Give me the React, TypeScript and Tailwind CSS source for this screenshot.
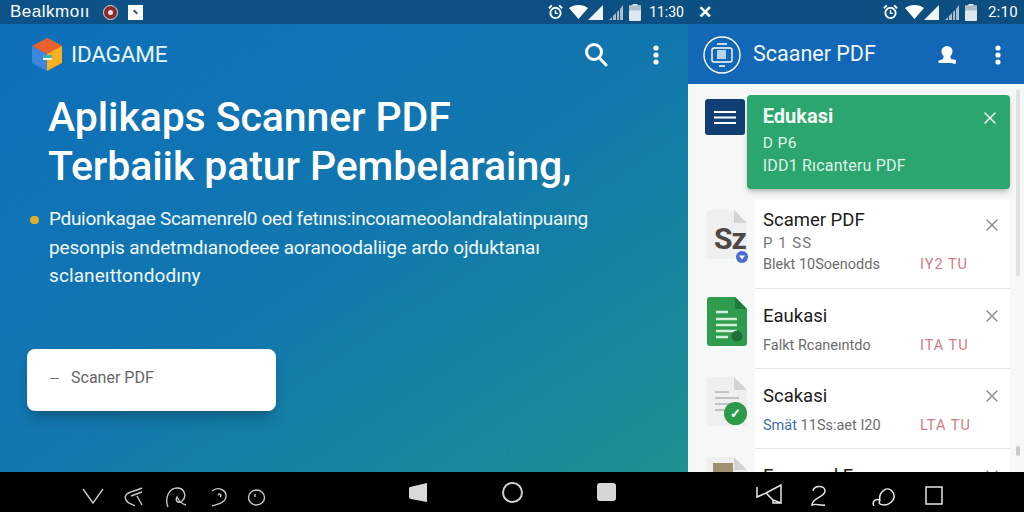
import React from 'react';
import { X } from 'lucide-react';

const Wifi = () => (
  <svg width="19" height="14" viewBox="0 0 19 14"><path d="M0 3C5.5 -1 13.5 -1 19 3L9.5 14z" fill="#fff" /></svg>
);
const Signal = () => (
  <svg width="15" height="15" viewBox="0 0 15 15">
    <path d="M15 0V15H0z" fill="#eef3f6" />
  </svg>
);
const SignalBars = () => (
  <svg width="14" height="15" viewBox="0 0 14 15" fill="#a9bfd0">
    <path d="M0 15L3 12V15zM4 15V11L7 8V15zM8 15V7L10 5V15zM11 15V4L14 0V15z" />
  </svg>
);
const Battery = () => (
  <svg width="12" height="17" viewBox="0 0 12 17">
    <rect x="3.5" y="0" width="5" height="2" fill="#dfe8ee" />
    <rect x="0" y="1.5" width="12" height="15.5" rx="1" fill="#dfe8ee" />
    <rect x="0" y="1.5" width="12" height="5" fill="#aebfcc" />
  </svg>
);
const Alarm = () => (
  <svg width="15" height="16" viewBox="0 0 16 16" fill="none" stroke="#fff" strokeWidth="2">
    <circle cx="8" cy="9" r="5.5" />
    <path d="M8 6v3.5h2.5" strokeWidth="1.5" />
    <path d="M1 4l3-3M15 4l-3-3" />
  </svg>
);
const Dots = () => (
  <svg width="8" height="20" viewBox="0 0 8 20" fill="#fff">
    <circle cx="4" cy="3" r="2.6" />
    <circle cx="4" cy="10" r="2.6" />
    <circle cx="4" cy="17" r="2.6" />
  </svg>
);

const FileGray = ({ children }: any) => (
  <svg width="40" height="50" viewBox="0 0 40 50">
    <path d="M3 0H27L40 13V46a3 3 0 0 1-3 3H3a3 3 0 0 1-3-3V3a3 3 0 0 1 3-3z" fill="#efefef" />
    <path d="M27 0L40 13H27z" fill="#d4d4d4" />
    {children}
  </svg>
);

const Row = ({ icon, title, sub, subAccent, tail, last }: any) => (
  <div className="flex h-[80px] shrink-0">
    <div className="w-[67px] shrink-0 pl-[19px] pt-[8px]">{icon}</div>
    <div className={`flex-1 flex bg-white pl-[8px] ${last ? '' : 'border-b border-[#e6e8e8]'}`}>
      <div className="flex-1 pt-[15px]">
        <div className="text-[18.5px] leading-[24px] text-[#1c1c1c]">{title}</div>
        {sub && (
          <div className="mt-[9px] flex text-[14.5px] leading-[18px] text-[#6d6d6d]">
            <span className="w-[157px]">
              {subAccent && <span className="text-[#3f6fa8]">{subAccent} </span>}
              {sub}
            </span>
            <span className="text-[#cf7d84] tracking-[1px]">{tail}</span>
          </div>
        )}
      </div>
      <X size={20} strokeWidth={1.6} className="text-[#8a8a8a] mr-[8px] mt-[17px]" />
    </div>
  </div>
);

export default function App() {
  return (
    <div className="w-[1024px] h-[512px] flex flex-col overflow-hidden bg-black font-['Roboto',sans-serif]">
      {/* status bar */}
      <div className="h-[24px] shrink-0 flex bg-gradient-to-r from-[#0d5288] to-[#0c4e80] text-white">
        <div className="w-[688px] flex items-center pl-[10px]">
          <span className="w-[80px] whitespace-nowrap text-[17px] tracking-[0.5px] font-['Liberation_Sans',sans-serif]">Bealkmoıı</span>
          <span className="ml-[13px] w-[15px] h-[15px] rounded-full bg-[#8c2a2a] border border-[#e9d6d6] flex items-center justify-center">
            <span className="w-[5px] h-[5px] rounded-full bg-[#f3e3e3]" />
          </span>
          <span className="ml-[10px] w-[15px] h-[15px] bg-white flex items-center justify-center">
            <span className="w-[5px] h-[2px] bg-[#33536d] rotate-45" />
          </span>
          <div className="ml-auto flex items-center pr-[4px]">
            <Alarm />
            <span className="ml-[6px]"><Wifi /></span>
            <Signal />
            <span className="ml-[6px]"><SignalBars /></span>
            <span className="ml-[6px]"><Battery /></span>
            <span className="ml-[8px] text-[14px]">11:30</span>
          </div>
        </div>
        <div className="flex-1 flex items-center pl-[10px]">
          <span className="text-[17px] font-bold leading-none">✕</span>
          <div className="ml-auto flex items-center pr-[6px]">
            <Alarm />
            <span className="ml-[7px]"><Wifi /></span>
            <Signal />
            <span className="ml-[6px]"><SignalBars /></span>
            <span className="ml-[6px]"><Battery /></span>
            <span className="ml-[11px] text-[15px] tracking-[0.3px]">2:10</span>
          </div>
        </div>
      </div>

      <div className="flex-1 flex min-h-0">
        {/* left panel */}
        <div className="w-[688px] shrink-0 bg-gradient-to-br from-[#0e6fbb] via-[#1277ae] to-[#1f9191] flex flex-col">
          <div className="h-[60px] shrink-0 flex items-center pl-[32px] pr-[28px] pt-[1px]">
            <svg width="30" height="33" viewBox="0 0 30 33">
              <path d="M15 0L30 8V25L15 33z" fill="#f9b01e" />
              <path d="M0 8L15 16V33L0 25z" fill="#3c86dc" />
              <path d="M15 0L30 8L15 16L0 8z" fill="#e8602d" />
              <path d="M11 17h9v3h-9z" fill="#3bb3b0" />
              <path d="M11 20h9v2h-9z" fill="#f4f7f0" />
            </svg>
            <span className="ml-[9px] text-[22.5px] text-[#e9f6fb] tracking-[-0.2px]">IDAGAME</span>
            <svg className="ml-auto" width="24" height="25" viewBox="0 0 24 25" fill="none" stroke="#fff" strokeWidth="3" strokeLinecap="round">
              <circle cx="10" cy="10" r="7.5" />
              <path d="M15.5 16L22 23" />
            </svg>
            <span className="ml-[44px]"><Dots /></span>
          </div>
          <div className="pl-[48px] pt-[9px]">
            <h1 className="whitespace-nowrap text-[41px] leading-[49px] font-medium text-white tracking-[-0.1px]">
              Aplikaps Scanner PDF
              <br />
              Terbaiik patur Pembelaraing,
            </h1>
          </div>
          <div className="relative pl-[49px] pt-[14px] text-[19px] leading-[28.5px] text-[#f0f8fb] whitespace-nowrap">
            <span className="absolute left-[30px] top-[25px] w-[9px] h-[8px] rounded-full bg-[#dcae2e]" />
            <p className="tracking-[-0.32px]">Pduionkagae Scamenrel0 oed fetınıs:incoıameoolandralatinpuaıng</p>
            <p className="tracking-[-0.17px]">pesonpis andetmdıanodeee aoranoodaliige ardo ojduktanaı</p>
            <p className="tracking-[0.1px]">sclaneıttondodıny</p>
          </div>
          <div className="pl-[27px] pt-[58px]">
            <div className="w-[249px] h-[62px] bg-white rounded-[8px] shadow-lg shadow-black/20 flex items-center pl-[23px] pb-[3px] text-[16px] text-[#666]">
              <span className="w-[9px] h-[1px] bg-[#777] mr-[12px]" />
              Scaner PDF
            </div>
          </div>
        </div>

        {/* right panel */}
        <div className="flex-1 flex flex-col min-w-0 bg-[#f6f7f7]">
          <div className="h-[60px] shrink-0 bg-[#1268b6] flex items-center pl-[15px] pr-[22px] pt-[1px] text-white">
            <svg width="38" height="38" viewBox="0 0 38 38" fill="none" stroke="#fff">
              <circle cx="19" cy="19" r="18" strokeWidth="1.4" />
              <rect x="9" y="12" width="20" height="14" rx="2" strokeWidth="1.4" />
              <rect x="14" y="14" width="9" height="9" fill="#b7d4ee" stroke="none" />
              <path d="M14 8h10M16 30h6" strokeWidth="1.4" />
            </svg>
            <span className="ml-[12px] text-[21.5px] text-[#eef5fb]">Scaaner PDF</span>
            <svg className="ml-auto" width="20" height="20" viewBox="0 0 20 20" fill="#fff">
              <circle cx="10" cy="6.5" r="5.5" />
              <path d="M7 10h6l1 4 5 1v3l-1 1-4-1H2l-1-2 5-2z" />
            </svg>
            <span className="ml-[37px]"><Dots /></span>
          </div>

          <div className="flex-1 relative overflow-hidden flex min-h-0">
            <div className="flex-1 min-w-0 pt-[11px]">
              <div className="flex items-start pl-[17px] pr-[2px]">
                <div className="mt-[4px] w-[40px] h-[36px] rounded-[3px] bg-[#123f73] flex items-center justify-center">
                  <svg width="22" height="14" viewBox="0 0 22 14" stroke="#fff" strokeWidth="2.2">
                    <path d="M0 2h22M0 7.5h22M0 13h22" />
                  </svg>
                </div>
                <div className="ml-[2px] w-[265px] h-[94px] rounded-[4px] bg-[#2ba66e] shadow-md shadow-black/20 pl-[16px] pr-[10px] pt-[8px] text-[#dff3e9] flex">
                  <div className="flex-1">
                    <div className="text-[20px] leading-[26px] font-bold text-[#f3fbf6]">Edukasi</div>
                    <div className="mt-[4px] text-[15.5px] leading-[20px] tracking-[0.4px]">D P6</div>
                    <div className="mt-[3px] text-[16px] leading-[20px] tracking-[0.2px]">IDD1 Rıcanteru PDF</div>
                  </div>
                  <X size={20} strokeWidth={1.6} className="text-white mt-[5px]" />
                </div>
              </div>
              <div className="mt-[11px] pr-[2px]">
                <div className="flex h-[89px]">
                  <div className="w-[67px] shrink-0 pl-[19px] pt-[10px]">
                    <div className="relative w-[40px]">
                      <FileGray />
                      <span className="absolute left-[7px] top-[14px] text-[30px] leading-[30px] font-bold text-[#4d4747] tracking-[-1px]">Sz</span>
                      <svg className="absolute left-[28px] top-[40px]" width="14" height="14" viewBox="0 0 14 14">
                        <circle cx="7" cy="7" r="6.5" fill="#4a6fd0" stroke="#fff" />
                        <path d="M4 5.5h6L7 9.5z" fill="#fff" />
                      </svg>
                    </div>
                  </div>
                  <div className="flex-1 flex bg-white pl-[8px] border-b border-[#e6e8e8]">
                    <div className="flex-1 pt-[8px]">
                      <div className="text-[18.5px] leading-[24px] text-[#1c1c1c]">Scamer PDF</div>
                      <div className="mt-[2px] text-[15px] leading-[18px] tracking-[1px] text-[#777]">P 1 SS</div>
                      <div className="mt-[4px] flex text-[14.5px] leading-[18px] text-[#6d6d6d]">
                        <span className="w-[157px]">Blekt 10Soenodds</span>
                        <span className="text-[#cf7d84] tracking-[1px]">IY2 TU</span>
                      </div>
                    </div>
                    <X size={20} strokeWidth={1.6} className="text-[#8a8a8a] mr-[8px] mt-[15px]" />
                  </div>
                </div>
                <Row
                  title="Eaukasi"
                  sub="Falkt Rcaneıntdo"
                  tail="ITA TU"
                  icon={
                    <svg width="40" height="50" viewBox="0 0 40 50">
                      <path d="M3 0H28L40 12V46a3 3 0 0 1-3 3H3a3 3 0 0 1-3-3V3a3 3 0 0 1 3-3z" fill="#2f9c4d" />
                      <path d="M28 0L40 12H28z" fill="#1f7a3b" />
                      <path d="M9 15h12M9 22h21M9 28h21M9 34h21M9 40h12" stroke="#d6efdb" strokeWidth="2.4" />
                      <circle cx="30" cy="39" r="5.5" fill="#1c7038" />
                    </svg>
                  }
                />
                <Row
                  title="Scakasi"
                  subAccent="Smät"
                  sub="11Ss:aet I20"
                  tail="LTA TU"
                  icon={
                    <div className="relative w-[40px]">
                      <FileGray>
                        <path d="M8 15h14M8 21h24M8 27h24M8 33h10" stroke="#b4b4b4" strokeWidth="1.5" />
                      </FileGray>
                      <span className="absolute left-[17px] top-[25px] w-[23px] h-[23px] rounded-full bg-[#2c9a48] flex items-center justify-center text-white text-[13px] font-bold">✓</span>
                    </div>
                  }
                />
                <Row
                  last
                  title="Fcaanıad F"
                  icon={
                    <FileGray>
                      <rect x="6" y="6" width="20" height="12" fill="#a09070" />
                    </FileGray>
                  }
                />
              </div>
            </div>
            <div className="w-[12px] shrink-0 flex flex-col items-center">
              <div className="mt-[6px] w-[4px] h-[186px] bg-[#e1e3e3]" />
              <div className="mt-[170px] w-[4px] h-[10px] rounded-full bg-[#c9cccc]" />
            </div>
          </div>
        </div>
      </div>

      {/* navigation bar */}
      <div className="h-[40px] shrink-0 flex items-center bg-black">
        <div className="w-[688px] flex items-center pl-[82px]">
          <svg width="190" height="30" viewBox="0 0 190 30" fill="none" stroke="#c8c8c8" strokeWidth="1.4">
            <path d="M1 12L11 26L21 12" />
            <path d="M60 11C52 15 40 15 44 23C46 27 50 27 53 29M49 19L60 15M55 19L60 28" />
            <path d="M86 30C82 20 88 11 95 11C103 11 105 20 100 24C96 27 93 24 95 20C97 24 100 27 104 28" />
            <path d="M130 14C136 9 145 13 144 20C143 26 136 27 130 29M136 18C138 16 140 18 138 20" />
            <ellipse cx="174.5" cy="20.5" rx="8" ry="7.5" />
            <path d="M173 17v3" />
          </svg>
          <svg className="ml-[137px]" width="18" height="19" viewBox="0 0 18 19" fill="#d8d8d8">
            <path d="M0 6a2 2 0 0 1 1-2L18 0V19L2 16a2 2 0 0 1-2-2z" />
          </svg>
          <span className="ml-[75px] w-[21px] h-[21px] rounded-full border-2 border-[#d0d0d0]" />
          <span className="ml-[74px] w-[19px] h-[18px] rounded-[3px] bg-[#d6d6d6]" />
        </div>
        <div className="flex-1 flex items-center pl-[68px]">
          <svg width="200" height="28" viewBox="0 0 200 28" fill="none" stroke="#e6e6e6" strokeWidth="1.5">
            <path d="M1 9V19L10 15L25 7V25L17 22L10 15M17 22V25L25 25" />
            <path d="M57 13C58 7 69 7 69 13C69 19 56 20 56 27C60 25 64 28 69 27" />
            <path d="M118 28C115 22 122 20 124 23C122 13 132 8 136 13C142 20 134 27 128 27C124 27 122 25 124 23" />
            <rect x="170" y="9" width="16" height="17" />
          </svg>
        </div>
      </div>
    </div>
  );
}
